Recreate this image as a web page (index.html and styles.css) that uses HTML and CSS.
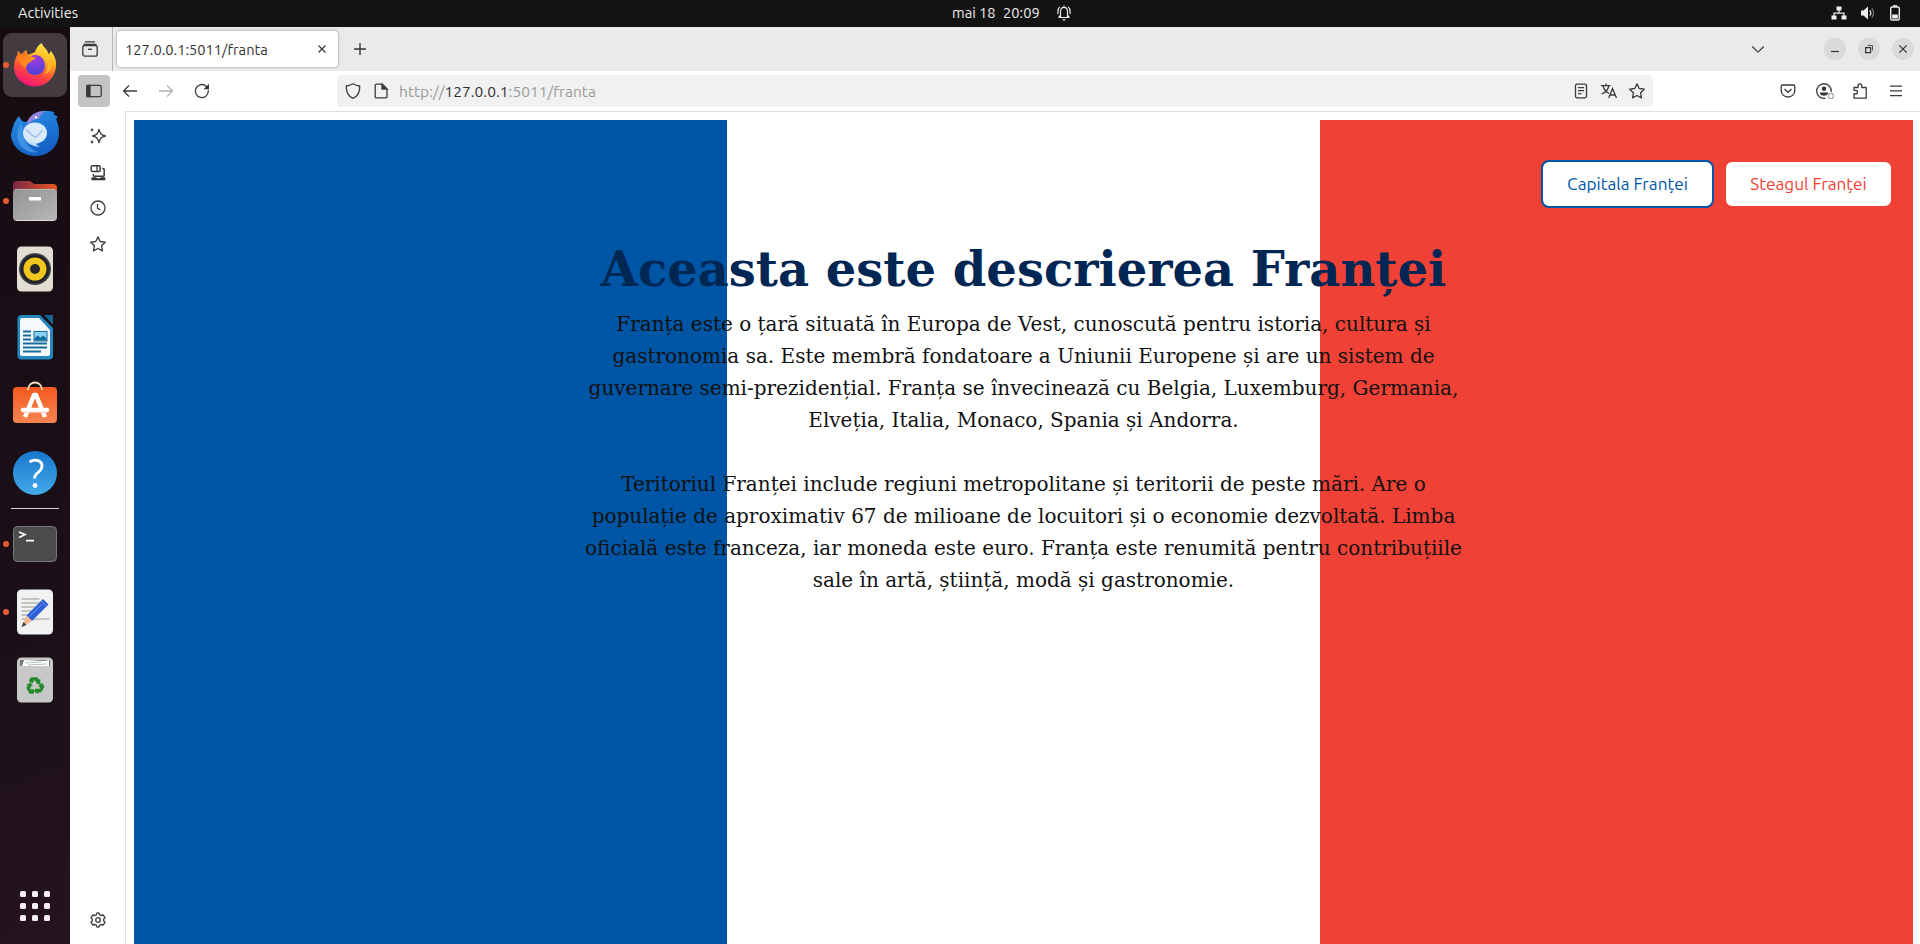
FILE: index.html
```html
<!DOCTYPE html>
<html lang="ro">
<head>
<meta charset="utf-8">
<title>127.0.0.1:5011/franta</title>
<link rel="stylesheet" href="styles.css">
</head>
<body>
<div class="desktop">
  <header class="topbar">
    <span class="activities">Activities</span>
    <div class="clock"><span class="date">mai 18</span><span class="time">20:09</span>
      <svg class="bell" width="16" height="18" viewBox="0 0 16 18" fill="none" stroke="#eee" stroke-width="1.2"><path d="M3 13.5h10M4.500 13V8c0-3 1.300-4.700 3.500-4.700S11.500 5 11.500 8v5M8 1.500v2M3.800 3C2.500 4 2 5.500 2 7.500V10M12.200 3c1.300 1 1.800 2.500 1.800 4.500V10M2.500 13.500 4 11.500M13.500 13.500 12 11.500"/><path d="M6 15.300h4L8 17z" fill="#eee" stroke="none"/></svg>
    </div>
    <div class="status">
      <svg width="16" height="16" viewBox="0 0 16 16" fill="#eee"><path d="M5.500 1.500h5v4h-5zM.5 10.500h5v4h-5zM10.500 10.500h5v4h-5z"/><path d="M8 5v3M3 11V8.200h10V11" fill="none" stroke="#eee" stroke-width="1.200"/></svg>
      <svg width="16" height="16" viewBox="0 0 16 16" fill="#eee"><path d="M1 5.500h2.500L8 1.500v13l-4.500-4H1z"/><path d="M9.700 5.500c1.400 1.500 1.400 3.500 0 5" fill="none" stroke="#ddd" stroke-width="1.300"/><path d="M11.700 3.500c2.600 2.600 2.600 6.400 0 9" fill="none" stroke="#777" stroke-width="1.200"/></svg>
      <svg width="12" height="16" viewBox="0 0 12 16" fill="none" stroke="#eee" stroke-width="1.400"><rect x="1.700" y="2" width="8.600" height="13" rx="1.500"/><path d="M4 .8h4"/><path d="M3.200 9.500h5.600v4H3.200z" fill="#eee" stroke="none"/></svg>
    </div>
  </header>
  <div class="workspace">
    <nav class="dock">
      <div class="app active running">
        <svg width="48" height="48" viewBox="0 0 48 48"><defs>
          <linearGradient id="ff" x1=".75" y1="0" x2=".35" y2="1"><stop offset="0" stop-color="#fff04a"/><stop offset=".35" stop-color="#ffb31f"/><stop offset=".65" stop-color="#ff5038"/><stop offset="1" stop-color="#f5107a"/></linearGradient>
          <radialGradient id="fg" cx=".5" cy=".2" r=".8"><stop offset="0" stop-color="#a23be0"/><stop offset="1" stop-color="#4b42d6"/></radialGradient>
          <linearGradient id="fo" x1="0" y1="0" x2="1" y2="1"><stop offset="0" stop-color="#ff6a20"/><stop offset="1" stop-color="#ffa51a"/></linearGradient></defs>
          <path d="M30.500 2c1 3 4 5 5.500 7.500l2 4 1.700-3.700c4 5.200 6 9.700 5.300 16C44 37 35 45.500 24 45.500S3 37 3 26c0-5 1.500-9 3.200-11.700L7 10l3.500 3.500L15 9l2 5 7-3c1-4 3.500-7 6.500-9z" fill="url(#ff)"/>
          <path d="M19 16c4-4 12-2 14 4 3 8-2 14-9 14-6 0-9-4-9-9z" fill="url(#fg)"/>
          <path d="M7 10l3.500 3.500L15 9l2 5.500 7.500 2c0 2-4.500 3-5 4.500-3 1-4 3-4.500 6C10 25 6 19 7 10z" fill="url(#fo)"/>
          <path d="M33 15c5 5 5 15-1 19 7-2 10-7 9-13-1 1-2 1-3 0-1-3-3-5-5-6z" fill="#ffc52b" opacity=".7"/></svg>
      </div>
      <div class="app">
        <svg class="low" width="48" height="48" viewBox="0 0 48 48"><defs><linearGradient id="tb" x1="0" y1="0" x2=".4" y2="1"><stop offset="0" stop-color="#2a92e8"/><stop offset="1" stop-color="#1460c4"/></linearGradient></defs>
          <path d="M8 6c1 3 3 5 5 6l6-1C21 4 28 0 36 1c4 0 6 .5 8 2l-2 1 5 3-2 2c2 4 3 9 3 14 0 13-10 23-23.500 23S0 36 0 24c1-3 1-5 2-7 1-4 3-8 6-11z" fill="url(#tb)"/>
          <path d="M16 13C18 5 25 1 35 1c-4 2-6 4-7 8-3-1-7 1-10 5z" fill="#9285e0"/>
          <path d="M10 13c-6 8-5 21 3 26 5 4 10 4 14 3-9-2-16-13-15-23z" fill="#4a9eec" opacity=".7"/>
          <ellipse cx="24" cy="23" rx="12" ry="10.500" fill="#d9e9fa"/><path d="M15 20c6 3 6 7 9 7s5-5 8-7" fill="none" stroke="#9dbde4" stroke-width="1.400"/><path d="M13 27c3 7 8 9 16 10-6-3-3-5-1-5-6 1-11-1-15-5z" fill="#c2def9"/><circle cx="25" cy="7.500" r="1.200" fill="#fff"/></svg>
      </div>
      <div class="app running">
        <svg width="48" height="48" viewBox="0 0 48 48"><defs><linearGradient id="fd"><stop stop-color="#792944"/><stop offset="1" stop-color="#e95420"/></linearGradient><linearGradient id="fb" x2="1" y2="1"><stop stop-color="#929292"/><stop offset="1" stop-color="#b8b8b8"/></linearGradient></defs>
          <path d="M2 8q0-4 4-4h13l4 3h19q4 0 4 4v15H2z" fill="url(#fd)"/><rect x="2" y="12" width="44" height="32" rx="4" fill="url(#fb)"/><path d="M5 43.500h38" stroke="#ddd"/><path d="M4 12.400h40" stroke="#bbb" stroke-width=".8"/><rect x="18" y="20" width="12" height="3.500" rx=".6" fill="#fff"/></svg>
      </div>
      <div class="app">
        <svg width="48" height="48" viewBox="0 0 48 48"><rect x="6" y="1.500" width="36" height="45" rx="4.500" fill="#e2dfd2"/><circle cx="24" cy="24" r="16" fill="#42424a"/><circle cx="24" cy="24" r="14.500" fill="#222229"/><circle cx="24" cy="24" r="11.500" fill="#f2c51f"/><circle cx="24" cy="24" r="5" fill="#25252a"/></svg>
      </div>
      <div class="app">
        <svg width="48" height="48" viewBox="0 0 48 48"><path d="M10.500 2H29l13 13v27.500q0 4-4 4H10.500q-4 0-4-4V6q0-4 4-4z" fill="#2388be"/><path d="M33 2h9v10z" fill="#176595"/><path d="M11 5h17l11 12v24q0 2-2 2H11q-2 0-2-2V7q0-2 2-2z" fill="#f5f9fc"/><path d="M12 18.500h8M12 22.500h8M12 26.500h8M12 30.500h24M12 34.500h24M12 38.500h18" stroke="#176b9c" stroke-width="1.800"/><rect x="23" y="18.500" width="13" height="9.500" fill="#88d2f6" stroke="#176b9c"/><path d="M23.500 27.500v-2l3-3 3 2 3-2 3 3v2z" fill="#176b9c"/></svg>
      </div>
      <div class="app">
        <svg class="high" width="48" height="48" viewBox="0 0 48 48"><defs><linearGradient id="sw" x2="0" y2="1"><stop stop-color="#f3591f"/><stop offset="1" stop-color="#f68452"/></linearGradient></defs><rect x="2" y="7" width="44" height="36" rx="4" fill="url(#sw)"/><path d="M17 10c0-10 14-10 14 0" fill="none" stroke="#f7d8bb" stroke-width="1.800"/><path d="M14 37 23 15h2l9 22" fill="none" stroke="#fff" stroke-width="4.500" stroke-linejoin="round"/><path d="M12 30h24" stroke="#fff" stroke-width="4.500" stroke-linecap="round"/><path d="M12 32.300h24" stroke="#f7c5ab"/></svg>
      </div>
      <div class="app">
        <svg width="48" height="48" viewBox="0 0 48 48"><defs><linearGradient id="hp" x2="0" y2="1"><stop stop-color="#1778cc"/><stop offset="1" stop-color="#43a9e9"/></linearGradient></defs><circle cx="24" cy="24" r="22" fill="url(#hp)"/><path d="M18.500 13c6-4 12.500-1 12.500 4 0 6.500-7.500 6-7.500 12.500" fill="none" stroke="#fff" stroke-width="2.800"/><circle cx="24" cy="36.500" r="2.400" fill="#fff"/></svg>
      </div>
      <div class="divider"></div>
      <div class="app running">
        <svg width="48" height="48" viewBox="0 0 48 48"><rect x="2.500" y="6.500" width="43" height="35" rx="4" fill="#4c4c4c" stroke="#777"/><path d="m8 12 6 2.500-6 3M15 20.700h8" fill="none" stroke="#fff" stroke-width="1.700"/></svg>
      </div>
      <div class="app running">
        <svg width="48" height="48" viewBox="0 0 48 48"><rect x="6" y="1.500" width="36" height="45" rx="4.500" fill="#f1f1f1"/><path d="M10.500 11h18M10.500 15h24M10.500 19h20M10.500 23h17M10.500 27h13M10.500 31h28" stroke="#c5c4bd" stroke-width="1.800"/><path d="m32 11 5.500 5.500L21 33l-5.500-5.500z" fill="#2f60d5"/><path d="m30 13 5.500 5.500M31 16 18 29" stroke="#6690ef"/><path d="m15.500 27.500 5.500 5.500-10 5.500z" fill="#f3b58b"/><path d="m12.500 34-2 5 5-2z" fill="#44403d"/></svg>
      </div>
      <div class="app">
        <svg width="48" height="48" viewBox="0 0 48 48"><rect x="6" y="1.500" width="36" height="45" rx="4.500" fill="#c8c8c8"/><path d="M9 10V4h30v6z" fill="#777"/><path d="m11 10 2-6 20 1 5-1v6z" fill="#fff"/><path d="m14 7 16-1M17 9l19-1" stroke="#bbb"/><g fill="#26892c" transform="translate(4.300 4.900) scale(.82)"><path id="arm" d="m18 21.500 1-1.500h8l2 3 1.500-.8v6h-5.500l1.500-1-3-4-2.500 4.200-4.500-2.500z"/><use href="#arm" transform="rotate(120 24 30.500)"/><use href="#arm" transform="rotate(240 24 30.500)"/></g></svg>
      </div>
      <div class="apps-grid"><i></i><i></i><i></i><i></i><i></i><i></i><i></i><i></i><i></i></div>
    </nav>
    <div class="browser">
      <div class="tabs">
        <div class="view"><svg class="ic" viewBox="0 0 16 16"><path d="M3 .8h10M1.500 3.300h13"/><rect x=".8" y="4.500" width="14.400" height="10.700" rx="2"/><path d="M6 8.300h4"/></svg></div>
        <div class="tab"><span>127.0.0.1:5011/franta</span><svg width="8" height="8" viewBox="0 0 8 8" fill="none" stroke="#333" stroke-width="1.200"><path d="m.5.500 7 7m0-7-7 7"/></svg></div>
        <svg class="plus" width="12" height="12" viewBox="0 0 12 12" stroke="#333" stroke-width="1.300"><path d="M6 0v12M0 6h12"/></svg>
        <svg class="chevron" width="12" height="7" viewBox="0 0 12 7" fill="none" stroke="#444" stroke-width="1.300"><path d="m.3.500 5.700 5.700L11.700.5"/></svg>
        <div class="winbtns">
          <span><svg width="10" height="10" viewBox="0 0 10 10"><path d="M1 7.500h8"/></svg></span>
          <span><svg width="10" height="10" viewBox="0 0 10 10"><path d="M1.600 3.600h5v5h-5z"/><path d="M3.500 1.500h5v5" stroke-width=".8"/></svg></span>
          <span><svg width="10" height="10" viewBox="0 0 10 10"><path d="m1.300 1.300 7.400 7.400m0-7.400L1.300 8.700"/></svg></span>
        </div>
      </div>
      <div class="toolbar">
        <div class="side-toggle"><svg class="ic" viewBox="0 0 16 16"><rect x=".8" y="2.300" width="14.400" height="11.400" rx="1.500"/><path d="M1 2.500h3v11H1z" fill="#333"/></svg></div>
        <svg class="ic back" viewBox="0 0 16 16"><path d="M15 8H1.500M7 2.500 1.500 8 7 13.500"/></svg>
        <svg class="ic forward" viewBox="0 0 16 16"><path d="M1 8h13.500M9 2.500 14.500 8 9 13.500"/></svg>
        <svg class="ic reload" viewBox="0 0 16 16"><path d="M14.300 7.200v1A6.500 6.500 0 1 1 11.500 2.700L13 4.300"/><path d="M15 .8v5.500H9.500z" fill="#333" stroke="none"/></svg>
        <div class="urlbar">
          <svg class="ic" viewBox="0 0 16 16"><path d="M8 .8c2.500 1.500 4.500 2 6.700 2.200C15 8.500 13 13.200 8 15.300 3 13.200 1 8.500 1.300 3 3.500 2.800 5.500 2.300 8 .8z"/></svg>
          <svg class="ic page-ic" viewBox="0 0 16 16"><path d="M3.500 1.200h5.700L14 6v7.500q0 1.300-1.300 1.300H3.500q-1.300 0-1.300-1.300v-11q0-1.300 1.300-1.300z"/><path d="M9 1v5h5z" fill="#444"/></svg>
          <span class="url">http://<b>127.0.0.1</b>:5011/franta</span>
          <div class="url-actions">
            <svg class="ic" viewBox="0 0 16 16"><rect x="2.500" y="1.200" width="11" height="13.600" rx="1.500"/><path d="M5 4.700h6M5 7.700h6M5 10.700h3.500"/></svg>
            <svg class="ic" viewBox="0 0 16 16"><path d="M0 2.700h9.500M5 .5v2M2 3c1 3.500 3 6 6 7.500M7.800 3c-.8 4-3.500 6.500-7 8M7.700 15 11.500 5.500l4 9.500M9 12h5.200"/></svg>
            <svg class="ic" viewBox="0 0 16 16"><path stroke-linejoin="round" d="m8 .9 2.200 4.600 5.100.7-3.700 3.600.9 5.100L8 12.500l-4.500 2.400.9-5.100L.7 6.200l5.100-.7z"/></svg>
          </div>
        </div>
        <div class="tools">
          <svg class="ic" viewBox="0 0 16 16"><path d="M2.700 2h10.600q1.500 0 1.500 1.500v4a6.800 6.500 0 0 1-13.600 0v-4Q1.200 2 2.700 2z"/><path d="m4.500 6 3.500 3.300L11.500 6"/></svg>
          <svg class="ic" viewBox="0 0 16 16"><path d="M15.200 9A7.300 7.300 0 1 0 9.500 15.200"/><circle cx="8" cy="5.700" r="2.200" fill="#333" stroke="none"/><path d="M4 9.500h8v1.200q-1 2-4 2t-4-2z" fill="#333" stroke="none"/><circle cx="15" cy="13" r="2.600" stroke="#aaa"/></svg>
          <svg class="ic" viewBox="0 0 16 16"><path stroke-linejoin="round" d="M2 15.200V11h1.500q2 0 2-1.800t-2-1.800H2V4.500h4V3q0-2.200 1.900-2.200T9.800 3v1.500h4.400v10.700z"/></svg>
          <svg class="ic" viewBox="0 0 16 16"><path d="M2 3.200h12M2 7.900h12M2 12.600h12"/></svg>
        </div>
      </div>
      <div class="body">
        <aside class="sidebar">
          <svg class="ic" viewBox="0 0 16 16"><path stroke-linejoin="round" d="M9 1.300C10 5.200 11 7 15.400 8 11 9 10 10.800 9 14.700 8 10.800 7 9 2.600 8 7 7 8 5.200 9 1.300z"/><circle cx="2" cy="2" r="1.400" fill="#555" stroke="none"/><circle cx="2" cy="14" r="1.400" fill="#555" stroke="none"/></svg>
          <svg class="ic low" viewBox="0 0 16 16"><rect x="1.200" y=".8" width="9" height="5.700" rx="1.200" stroke-width="1.500"/><path d="M7 1v5.500"/><path d="M12.300 3.500h.7q1.200 0 1.200 1.200v5.600q0 1-1 1H4.500q-1.200 0-1.200-1.200V9" stroke-width="1.500"/><path d="M2 12.300h4l1 1h3l1-1h3.500q.8 0 .8 1v1.900H1.500v-2q0-.9.500-.9z" fill="#333" stroke="none"/></svg>
          <svg class="ic" viewBox="0 0 16 16"><circle cx="8" cy="8" r="7"/><path d="M7.500 4v4.300l3 1.700"/></svg>
          <svg class="ic" viewBox="0 0 16 16"><path stroke-linejoin="round" d="m8 .9 2.200 4.600 5.100.7-3.700 3.600.9 5.100L8 12.500l-4.500 2.400.9-5.100L.7 6.200l5.100-.7z"/></svg>
          <svg class="ic gear" viewBox="0 0 16 16"><path stroke-linejoin="round" d="M6.500 2.600 7 .8h2l.5 1.800 1.500.9 1.900-.5 1.300 1.300.8 1.400L13.700 7v2l1.300 1.300-.8 1.400-1.300 1.300-1.900-.5-1.500.9L9 15.200H7l-.5-1.800-1.500-.9-1.900.5-1.300-1.300L1 10.300 2.300 9V7L1 5.700l.8-1.400L3.100 3l1.900.5z"/><circle cx="8" cy="8" r="2.300"/></svg>
        </aside>
        <main class="page">
          <div class="flag">
            <div class="actions"><a class="btn blue">Capitala Franței</a><a class="btn red">Steagul Franței</a></div>
            <h1>Aceasta este descrierea Franței</h1>
            <p>Franța este o țară situată în Europa de Vest, cunoscută pentru istoria, cultura și<br>gastronomia sa. Este membră fondatoare a Uniunii Europene și are un sistem de<br>guvernare semi-prezidențial. Franța se învecinează cu Belgia, Luxemburg, Germania,<br>Elveția, Italia, Monaco, Spania și Andorra.<br><br>Teritoriul Franței include regiuni metropolitane și teritorii de peste mări. Are o<br>populație de aproximativ 67 de milioane de locuitori și o economie dezvoltată. Limba<br>oficială este franceza, iar moneda este euro. Franța este renumită pentru contribuțiile<br>sale în artă, știință, modă și gastronomie.</p>
          </div>
        </main>
      </div>
    </div>
  </div>
</div>
</body>
</html>
```
FILE: styles.css
```css
* { box-sizing: border-box; }
body { margin: 0; overflow: hidden; font-family: Ubuntu, "Noto Sans", sans-serif; }
svg { display: block; flex: none; overflow: visible; }
.desktop { height: 944px; display: flex; flex-direction: column; background: #fff; }
.topbar { height: 27px; flex: none; padding-bottom: 2px; background: #131313; color: #eee; font-size: 14.670px; display: grid; grid-template-columns: 952px 1fr auto; align-items: center; line-height: 25px; white-space: nowrap; }
.activities { padding-left: 18px; }
.clock { display: flex; align-items: center; }
.date { width: 51px; }
.time { width: 53px; }
.status { display: flex; align-items: center; gap: 13px; padding-right: 19px; }
.workspace { flex: 1; display: flex; min-height: 0; }
.dock { width: 70px; flex: none; background: linear-gradient(160deg, #180c13 0%, #1b1017 65%, #25131e 100%); display: flex; flex-direction: column; align-items: center; padding-top: 6px; }
.app { width: 64px; height: 64px; margin-bottom: 4px; display: grid; place-items: center; border-radius: 9px; position: relative; }
.app.active { background: #443b40; }
.app.running::before { content: ""; position: absolute; left: 0; top: 29px; width: 6px; height: 6px; border-radius: 50%; background: #e95b35; }
.low { transform: translateY(1px); }
.high { transform: translateY(-1px); }
.divider { width: 48px; height: 1px; background: #d5d0d2; margin: -1px 0 3px; }
.apps-grid { margin-top: auto; margin-bottom: 23px; display: grid; grid-template-columns: repeat(3, 6px); gap: 6px; }
.apps-grid i { width: 6px; height: 6px; border-radius: 1.500px; background: #f4eef2; }
.browser { flex: 1; display: flex; flex-direction: column; min-width: 0; }
.ic { width: 16px; height: 16px; fill: none; stroke: #3b3b3b; stroke-width: 1.300; }
.tabs { height: 44px; flex: none; background: #eaeaea; display: flex; align-items: center; }
.view { width: 43px; height: 44px; padding-left: 12px; display: flex; align-items: center; border-right: 1px solid #b5b5b5; }
.tab { width: 221px; height: 36px; margin-left: 4px; background: #fff; border-radius: 4px; box-shadow: 0 0 3px rgba(0,0,0,.4); display: flex; align-items: center; justify-content: space-between; padding: 0 12px 0 8px; font-size: 14.670px; color: #333; white-space: nowrap; }
.plus { margin-left: 16px; }
.chevron { margin-left: auto; }
.winbtns { display: flex; gap: 12px; margin: 0 6px 0 60px; }
.winbtns span { width: 22px; height: 22px; border-radius: 50%; background: #dadada; display: grid; place-items: center; }
.winbtns svg { fill: none; stroke: #333; stroke-width: 1.200; }
.toolbar { height: 40px; flex: none; display: flex; align-items: center; padding-left: 8px; }
.side-toggle { width: 32px; height: 32px; border-radius: 4px; background: #c3c3c3; display: grid; place-items: center; }
.back { margin-left: 12px; }
.forward { margin-left: 20px; stroke: #b0b0b0; }
.reload { margin-left: 20px; }
.urlbar { width: 1316px; height: 32px; margin-left: 127px; background: #f1f1f1; border-radius: 4px; display: flex; align-items: center; padding: 0 8px; }
.page-ic { margin-left: 12px; }
.url { margin-left: 10px; font-size: 15.550px; color: #999; white-space: nowrap; }
.url b { font-weight: 400; color: #2f2f2f; }
.url-actions { margin-left: auto; display: flex; gap: 12px; }
.tools { display: flex; gap: 20px; margin-left: auto; padding-right: 16px; }
.body { flex: 1; display: flex; min-height: 0; }
.sidebar { width: 55px; flex: none; display: flex; flex-direction: column; align-items: center; gap: 20px; padding: 17px 0 16px; }
.gear { margin-top: auto; }
.page { flex: 1; border-left: 1px solid #dedede; border-top: 1px solid #dedede; padding: 8px 7px 0 8px; }
.flag { height: 100%; background: linear-gradient(90deg, #0055a4 33.333%, #fff 33.333% 66.667%, #ef4135 66.667%); text-align: center; font-family: "DejaVu Serif", serif; }
.actions { display: flex; justify-content: flex-end; gap: 10px; padding: 40px 20px 0 0; }
.btn { height: 48px; padding-bottom: 2px; border: 2px solid; border-radius: 8px; background: #fff; display: grid; place-items: center; font: 17.200px Ubuntu, "Noto Sans", sans-serif; white-space: nowrap; }
.blue { width: 173px; color: #0055a4; }
.red { width: 169px; color: #ef4135; }
.flag h1 { margin: 32px 0 0; font-size: 48px; line-height: 58px; color: #002654; white-space: nowrap; }
.flag p { margin: 10px 0 0; font-size: 20px; line-height: 32px; color: #111; white-space: nowrap; }
```
